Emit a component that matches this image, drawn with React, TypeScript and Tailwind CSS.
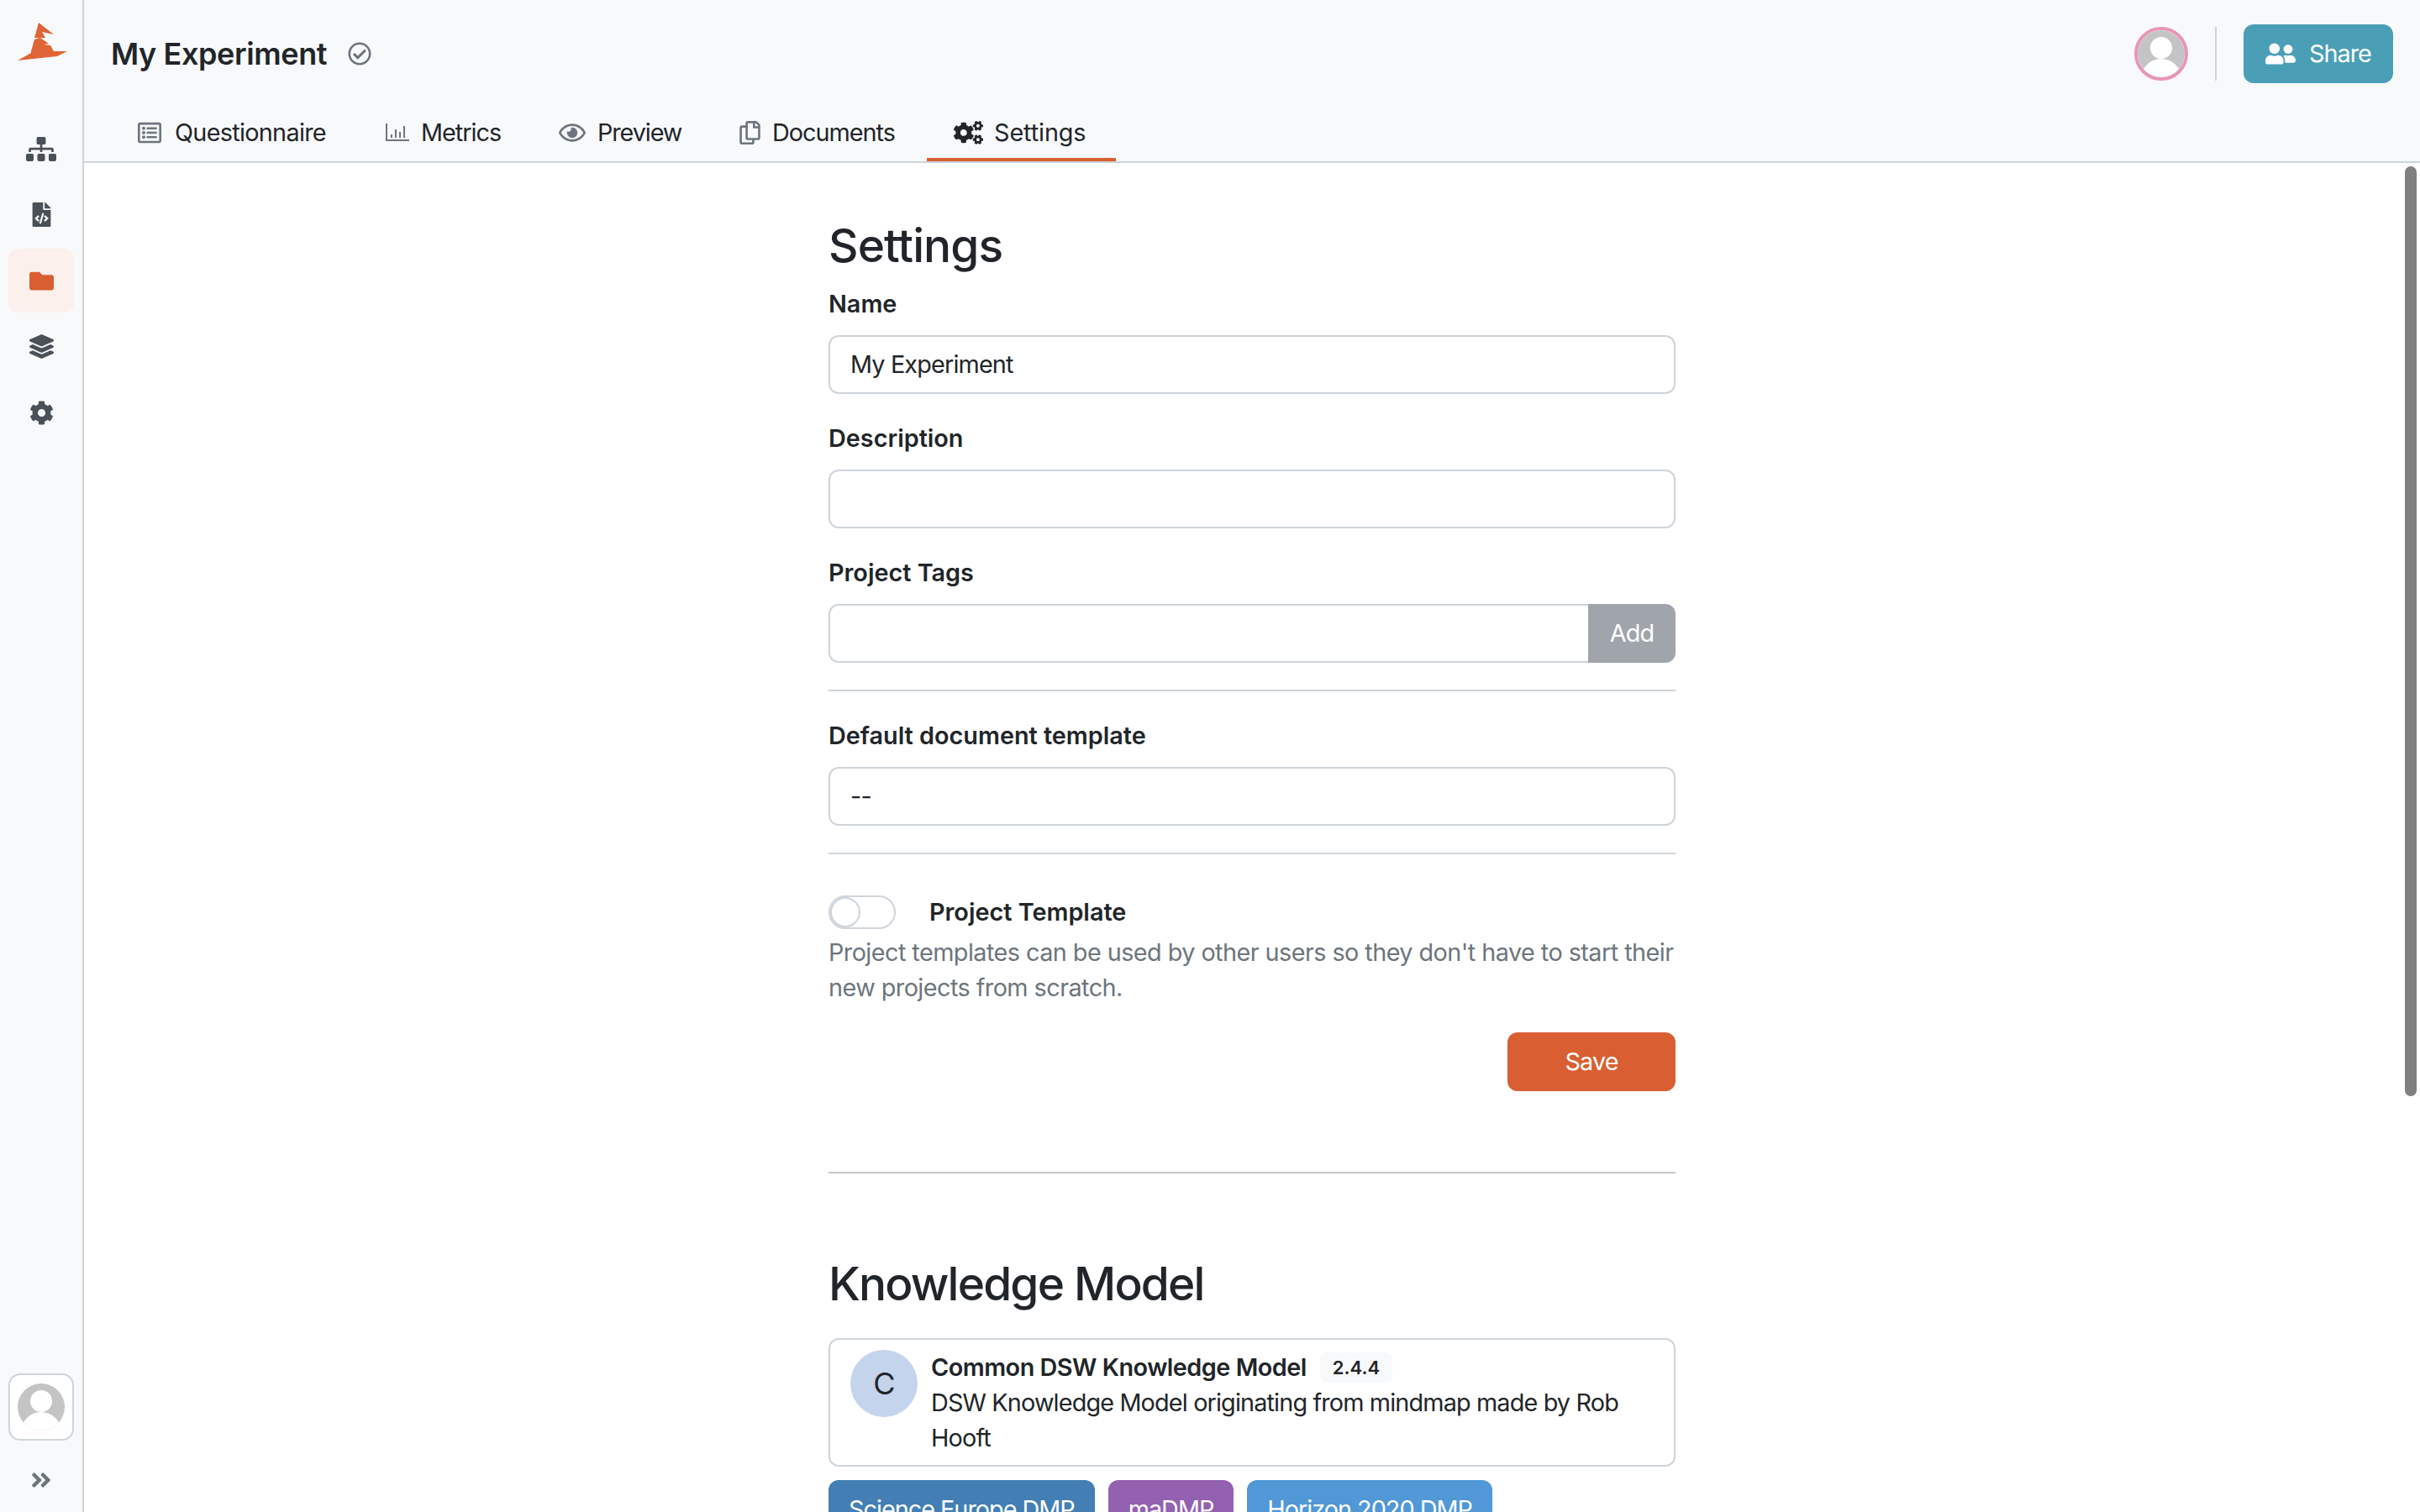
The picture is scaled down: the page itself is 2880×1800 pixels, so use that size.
import {
  FaAngleDoubleRight,
  FaCog,
  FaCogs,
  FaFileCode,
  FaFolder,
  FaLayerGroup,
  FaRegCheckCircle,
  FaRegCopy,
  FaRegEye,
  FaRegListAlt,
  FaSitemap,
  FaUserFriends,
} from 'react-icons/fa';
import { clsx } from 'clsx';

function MetricsIcon() {
  return (
    <svg width="28" height="22" viewBox="0 0 28 22" fill="none" stroke="#6c757d" strokeWidth="2">
      <path d="M1 0v20h27" />
      <path d="M7 13v4M12 7v10M17 10v7M22 3v14" />
    </svg>
  );
}

function DefaultAvatar({ id }: { id: string }) {
  return (
    <svg width="56" height="56" viewBox="0 0 56 56" className="block">
      <clipPath id={id}>
        <circle cx="28" cy="28" r="28" />
      </clipPath>
      <g clipPath={`url(#${id})`}>
        <rect width="56" height="56" fill="#c4c4c4" />
        <circle cx="28" cy="21" r="13" fill="#fff" />
        <ellipse cx="28" cy="58" rx="24" ry="24" fill="#fff" />
      </g>
    </svg>
  );
}

function Sidebar() {
  const items = [
    { icon: <FaSitemap size={29} className="w-[36px]" />, active: false },
    { icon: <FaFileCode size={29} />, active: false },
    { icon: <FaFolder size={29} />, active: true },
    { icon: <FaLayerGroup size={29} />, active: false },
    { icon: <FaCog size={29} />, active: false },
  ];

  return (
    <aside className="flex w-[100px] shrink-0 flex-col border-r-2 border-[#ced4da] bg-[#f8f9fb]">
      <svg width="98" height="139" viewBox="0 0 98 139" className="block shrink-0">
        <polygon
          fill="#e06536"
          points="46,27 64,41 50,38 54,45 48,45 58,52 52,53 60,54 64,61 80,61 68,67 21,72 37,63 37,61 41,47 47,45 41,45"
        />
      </svg>
      <nav className="flex flex-col gap-[2.5px] px-[10px]">
        {items.map((item, i) => (
          <div
            key={i}
            className={
              item.active
                ? 'flex h-[76px] items-center justify-center rounded-[12px] bg-[#fbf0eb] text-[#d95f33]'
                : 'flex h-[76px] items-center justify-center text-[#495057]'
            }
          >
            {item.icon}
          </div>
        ))}
      </nav>
      <div className="mt-auto flex flex-col items-center px-[10px]">
        <div className="flex h-[80px] w-[78px] items-center justify-center rounded-[14px] border-2 border-[#ced4da] bg-white">
          <DefaultAvatar id="avatar-side" />
        </div>
        <div className="flex h-[85px] items-center justify-center pt-[9px] text-[#6c757d]">
          <FaAngleDoubleRight size={28} />
        </div>
      </div>
    </aside>
  );
}

function Tab({
  icon,
  label,
  className,
  iconClass,
  active,
}: {
  icon: React.ReactNode;
  label: string;
  className: string;
  iconClass: string;
  active?: boolean;
}) {
  return (
    <div
      className={clsx(
        'flex h-[65px] shrink-0 items-center border-b-4 pl-[32px] text-[#212529]',
        active ? 'border-[#d95f33]' : 'border-transparent',
        className,
      )}
    >
      <span className={clsx('flex justify-center', active ? 'text-[#212529]' : 'text-[#6c757d]', iconClass)}>
        {icon}
      </span>
      {label}
    </div>
  );
}

function Header() {
  return (
    <header className="h-[194px] shrink-0 border-b-2 border-[#ced4da] bg-[#f8f9fb]">
      <div className="flex h-[127px] items-center pl-[32px] pr-[32px]">
        <h1 className="text-[36px] font-semibold tracking-[-0.4px] text-[#212529]">My Experiment</h1>
        <FaRegCheckCircle size={28} className="ml-[25px] text-[#6c757d]" />
        <div className="ml-auto h-[64px] w-[64px] overflow-hidden rounded-full border-4 border-[#e895b8]">
          <DefaultAvatar id="avatar-head" />
        </div>
        <div className="mx-[32px] h-[64px] w-[2px] bg-[#ced4da]" />
        <button className="flex h-[70px] w-[178px] items-center justify-center gap-[16px] rounded-[12px] bg-[#4a9fb7] text-[28.8px] tracking-[-1px] text-white">
          <FaUserFriends size={36} />
          Share
        </button>
      </div>
      <div className="flex pl-[32px]">
        <Tab
          icon={<FaRegListAlt size={28} />}
          label="Questionnaire"
          className="mr-[8px] w-[287px] tracking-[-0.7px]"
          iconClass="mr-[16px] w-[28px]"
        />
        <Tab
          icon={<MetricsIcon />}
          label="Metrics"
          className="mr-[4px] w-[202px] tracking-[-1px]"
          iconClass="mr-[14px] w-[28px]"
        />
        <Tab
          icon={<FaRegEye size={32} />}
          label="Preview"
          className="mr-[5px] w-[210px] tracking-[-1.1px]"
          iconClass="mr-[14px] w-[32px]"
        />
        <Tab
          icon={<FaRegCopy size={28} />}
          label="Documents"
          className="mr-[6px] w-[249px] tracking-[-1px]"
          iconClass="mr-[14px] w-[25px]"
        />
        <Tab
          icon={<FaCogs size={36} />}
          label="Settings"
          className="w-[225px] tracking-[-0.1px]"
          iconClass="mr-[13px] w-[35px]"
          active
        />
      </div>
    </header>
  );
}

function Field({ label, value, mb }: { label: string; value?: string; mb?: boolean }) {
  return (
    <div className={mb ? 'mb-[32px]' : ''}>
      <label className="mb-[16px] block font-semibold leading-[42px] tracking-normal">{label}</label>
      <div className="flex h-[70px] items-center rounded-[12px] border-2 border-[#ced4da] bg-white px-[24px]">
        {value}
      </div>
    </div>
  );
}

function Tag({ label, color }: { label: string; color: string }) {
  return (
    <span className={`flex h-[70px] items-center rounded-[12px] px-[24px] tracking-[-1px] text-white ${color}`}>
      {label}
    </span>
  );
}

function SettingsForm() {
  return (
    <div className="mx-auto w-[1008px] pt-[64px] text-[28.8px] leading-[42px] tracking-[-0.85px] text-[#212529]">
      <h2 className="mb-[14px] text-[55px] font-medium leading-[69px] tracking-[-0.9px]">Settings</h2>
      <Field label="Name" value="My Experiment" mb />
      <Field label="Description" mb />
      <label className="mb-[16px] block font-semibold leading-[42px] tracking-normal">Project Tags</label>
      <div className="flex h-[70px]">
        <div className="flex-1 rounded-l-[12px] border-2 border-r-0 border-[#ced4da] bg-white" />
        <button className="w-[104px] rounded-r-[12px] bg-[#a0a4ab] text-white">Add</button>
      </div>
      <hr className="my-[32px] border-t-2 border-[#ced4da]" />
      <Field label="Default document template" value="--" />
      <hr className="my-[32px] border-t-2 border-[#ced4da]" />

      <div className="mt-[48px] flex items-center">
        <div className="h-[40px] w-[80px] rounded-full border-2 border-[#ced4da] bg-white">
          <div className="h-full w-[36px] rounded-full border-2 border-[#ced4da] bg-white" />
        </div>
        <span className="ml-[40px] font-semibold tracking-normal">Project Template</span>
      </div>
      <p className="mt-[6px] tracking-[-0.55px] text-[#6c757d]">
        Project templates can be used by other users so they don't have to start their new projects from scratch.
      </p>
      <div className="mt-[32px] flex justify-end">
        <button className="h-[70px] w-[200px] rounded-[12px] bg-[#d95f33] text-white">Save</button>
      </div>
      <hr className="mt-[96px] border-t-2 border-[#c6c7c9]" />

      <h2 className="mb-[30px] mt-[97px] text-[55px] font-medium leading-[69px] tracking-[-1.8px]">Knowledge Model</h2>
      <div className="flex h-[153px] rounded-[12px] border-2 border-[#ced4da] bg-white pl-[24px] pr-[24px] pt-[12px]">
        <div className="flex h-[80px] w-[80px] shrink-0 items-center justify-center rounded-full bg-[#c5d4ed] text-[36px]">
          C
        </div>
        <div className="ml-[16px]">
          <div className="flex items-center">
            <strong className="font-semibold tracking-[-0.5px]">Common DSW Knowledge Model</strong>
            <span className="ml-[16px] rounded-[8px] bg-[#f8f9fa] px-[15px] text-[22px] font-semibold leading-[36px] tracking-normal">
              2.4.4
            </span>
          </div>
          <p>DSW Knowledge Model originating from mindmap made by Rob Hooft</p>
        </div>
      </div>
      <div className="mt-[16px] flex gap-[16px]">
        <Tag label="Science Europe DMP" color="bg-[#437fb4]" />
        <Tag label="maDMP" color="bg-[#9460b0]" />
        <Tag label="Horizon 2020 DMP" color="bg-[#5198d6]" />
      </div>
    </div>
  );
}

export default function App() {
  return (
    <div className="flex h-screen overflow-hidden bg-white font-['Inter',sans-serif] text-[28.8px]">
      <Sidebar />
      <div className="flex flex-1 flex-col overflow-hidden">
        <Header />
        <main className="relative flex-1 overflow-hidden">
          <SettingsForm />
          {/* Scrollbar thumb */}
          <div className="absolute right-[4px] top-[4px] h-[1107px] w-[14px] rounded-full bg-[#808080]" />
        </main>
      </div>
    </div>
  );
}
